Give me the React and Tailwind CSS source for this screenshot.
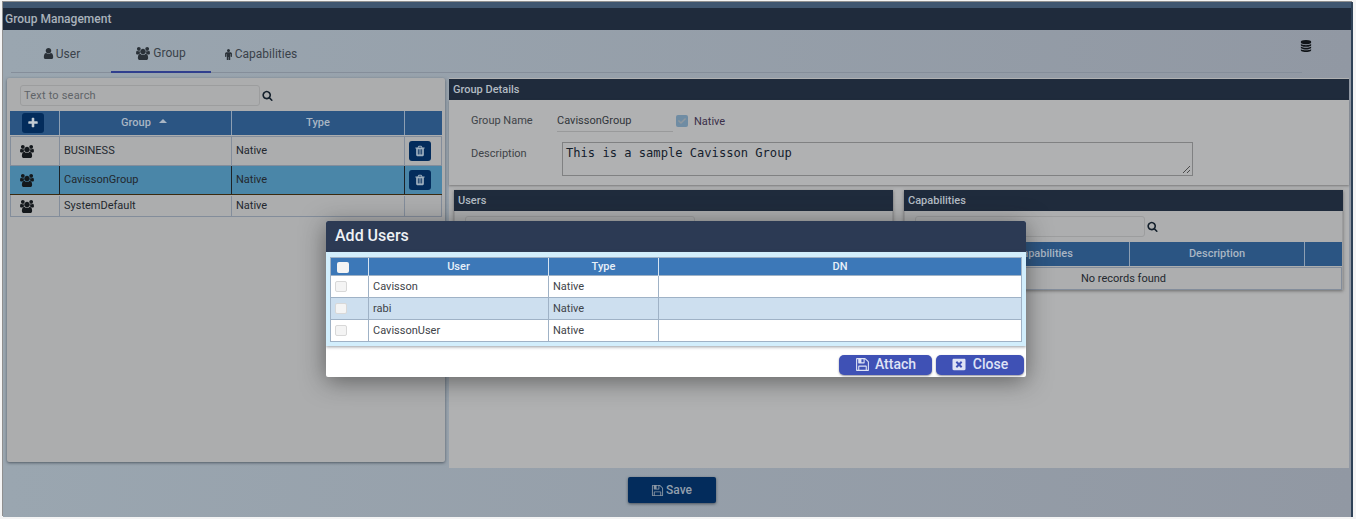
import React from 'react';
import { FaWindowClose, FaCheck } from 'react-icons/fa';

// font awesome 4 glyphs, the fa package only has the newer shapes
const glyphs = {
    user: { box: '0 0 1792 1792', d: 'M1536 1399q0 109-62.5 187t-150.5 78h-854q-88 0-150.5-78t-62.5-187q0-85 8.5-160.5t31.5-152 58.5-131 94-89 134.5-34.5q131 128 313 128t313-128q76 0 134.5 34.5t94 89 58.5 131 31.5 152 8.5 160.5zm-256-887q0 159-112.5 271.5t-271.5 112.5-271.5-112.5-112.5-271.5 112.5-271.5 271.5-112.5 271.5 112.5 112.5 271.5z' },
    users: { box: '0 0 1920 1792', d: 'M593 896q-162 5-265 128h-134q-82 0-138-40.5t-56-118.5q0-353 124-353 6 0 43.5 21t97.5 42.5 119 21.5q67 0 133-23-5 37-5 66 0 139 81 256zm1071 637q0 120-73 189.5t-194 69.5h-874q-121 0-194-69.5t-73-189.5q0-53 3.5-103.5t14-109 26.5-108.5 43-97.5 62-81 85.5-53.5 111.5-20q10 0 43 21.5t73 48 107 48 135 21.5 135-21.5 107-48 73-48 43-21.5q61 0 111.5 20t85.5 53.5 62 81 43 97.5 26.5 108.5 14 109 3.5 103.5zm-1024-1277q0 106-75 181t-181 75-181-75-75-181 75-181 181-75 181 75 75 181zm704 384q0 159-112.5 271.5t-271.5 112.5-271.5-112.5-112.5-271.5 112.5-271.5 271.5-112.5 271.5 112.5 112.5 271.5zm576 225q0 78-56 118.5t-138 40.5h-134q-103-123-265-128 81-117 81-256 0-29-5-66 66 23 133 23 59 0 119-21.5t97.5-42.5 43.5-21q124 0 124 353zm-128-609q0 106-75 181t-181 75-181-75-75-181 75-181 181-75 181 75 75 181z' },
    male: { box: '0 0 1024 1792', d: 'M1024 832v416q0 40-28 68t-68 28-68-28-28-68v-352h-64v912q0 46-33 79t-79 33-79-33-33-79v-464h-64v464q0 46-33 79t-79 33-79-33-33-79v-912h-64v352q0 40-28 68t-68 28-68-28-28-68v-416q0-80 56-136t136-56h640q80 0 136 56t56 136zm-288-448q0 93-65.5 158.5t-158.5 65.5-158.5-65.5-65.5-158.5 65.5-158.5 158.5-65.5 158.5 65.5 65.5 158.5z' },
    save: { box: '0 0 1792 1792', d: 'M512 1536h768v-384h-768v384zm896 0h128v-896q0-14-10-38.5t-20-34.5l-281-281q-10-10-34-20t-39-10v416q0 40-28 68t-68 28h-576q-40 0-68-28t-28-68v-416h-128v1280h128v-416q0-40 28-68t68-28h832q40 0 68 28t28 68v416zm-384-928v-320q0-13-9.5-22.5t-22.5-9.5h-192q-13 0-22.5 9.5t-9.5 22.5v320q0 13 9.5 22.5t22.5 9.5h192q13 0 22.5-9.5t9.5-22.5zm640 32v928q0 40-28 68t-68 28h-1344q-40 0-68-28t-28-68v-1344q0-40 28-68t68-28h928q40 0 88 20t76 48l280 280q28 28 48 76t20 88z' },
    trash: { box: '0 0 1792 1792', d: 'M704 1376v-704q0-14-9-23t-23-9h-64q-14 0-23 9t-9 23v704q0 14 9 23t23 9h64q14 0 23-9t9-23zm256 0v-704q0-14-9-23t-23-9h-64q-14 0-23 9t-9 23v704q0 14 9 23t23 9h64q14 0 23-9t9-23zm256 0v-704q0-14-9-23t-23-9h-64q-14 0-23 9t-9 23v704q0 14 9 23t23 9h64q14 0 23-9t9-23zm-544-992h448l-48-117q-7-9-17-11h-317q-10 2-17 11zm928 32v64q0 14-9 23t-23 9h-96v948q0 83-47 143.5t-113 60.5h-832q-66 0-113-58.5t-47-141.5v-952h-96q-14 0-23-9t-9-23v-64q0-14 9-23t23-9h309l70-167q15-37 54-63t79-26h320q40 0 79 26t54 63l70 167h309q14 0 23 9t9 23z' },
    search: { box: '0 0 1792 1792', d: 'M1216 832q0-185-131.5-316.5t-316.5-131.5-316.5 131.5-131.5 316.5 131.5 316.5 316.5 131.5 316.5-131.5 131.5-316.5zm512 832q0 52-38 90t-90 38q-54 0-90-38l-343-342q-179 124-399 124-143 0-273.5-55.5t-225-150-150-225-55.5-273.5 55.5-273.5 150-225 225-150 273.5-55.5 273.5 55.5 225 150 150 225 55.5 273.5q0 220-124 399l343 343q37 37 37 90z' },
    database: { box: '0 0 1792 1792', d: 'M896 768q237 0 443-43t325-127v170q0 69-103 128t-280 93.5-385 34.5-385-34.5-280-93.5-103-128v-170q119 84 325 127t443 43zm0 768q237 0 443-43t325-127v170q0 69-103 128t-280 93.5-385 34.5-385-34.5-280-93.5-103-128v-170q119 84 325 127t443 43zm0-384q237 0 443-43t325-127v170q0 69-103 128t-280 93.5-385 34.5-385-34.5-280-93.5-103-128v-170q119 84 325 127t443 43zm0-1152q208 0 385 34.5t280 93.5 103 128v128q0 69-103 128t-280 93.5-385 34.5-385-34.5-280-93.5-103-128v-128q0-69 103-128t280-93.5 385-34.5z' },
    plus: { box: '0 0 1792 1792', d: 'M1600 736v192q0 40-28 68t-68 28h-416v416q0 40-28 68t-68 28h-192q-40 0-68-28t-28-68v-416h-416q-40 0-68-28t-28-68v-192q0-40 28-68t68-28h416v-416q0-40 28-68t68-28h192q40 0 68 28t28 68v416h416q40 0 68 28t28 68z' },
};

function Glyph({ name, className }) {
    const g = glyphs[name];
    return (
        <svg viewBox={g.box} className={`shrink-0 ${className}`} fill="currentColor">
            <path d={g.d} />
        </svg>
    );
}

const groupCols = 'grid grid-cols-[50px_172px_173px_37px]';
const capCols = 'grid grid-cols-[54px_171px_175px_37px]';
const userCols = 'grid grid-cols-[38px_180px_110px_1fr]';

const groups = [
    { name: 'BUSINESS', rowClass: 'h-[29px] border-b border-[#838d9b]', trash: true },
    { name: 'CavissonGroup', rowClass: 'h-[29px] bg-[#4a86a8] border-b border-[#3a2a10]', trash: true, selected: true },
    { name: 'SystemDefault', rowClass: 'h-[22px] pt-[1px] border-b border-[#838d9b]', trash: false },
];

const users = ['Cavisson', 'rabi', 'CavissonUser'];

function SearchBox({ width, placeholder }) {
    return (
        <div className="flex items-center gap-[2px]">
            <div className={`${width} h-[21px] border border-[#9c9d9e] rounded-[3px] pl-[3px] text-[11px] leading-[20px] tracking-[0.2px] text-[#5f6468]`}>
                {placeholder}
            </div>
            <Glyph name="search" className="w-[11px] h-[11px] text-[#14202c]" />
        </div>
    );
}

function PanelTitle({ children }) {
    return <div className="h-[21px] bg-[#1f2b3c] text-[#b3bbc3] text-[11px] font-medium leading-[21px] pl-1">{children}</div>;
}

function SubPanel({ title, heads, empty }) {
    return (
        <div className="w-[439px] h-[100px] shadow-[0_1px_3px_rgba(60,60,60,0.6)]">
            <PanelTitle>{title}</PanelTitle>
            <div className="bg-[#adaeaf] border-x border-[#9c9d9e] h-[79px]">
                <div className="pl-[10px] h-[31px] pt-[5px]">
                    <SearchBox width="w-[230px]" />
                </div>
                <div className={`${capCols} h-[24px] bg-[#2b5583] text-[#a9b6c4] text-[11px] font-medium leading-[24px] text-center`}>
                    {heads.map((h, i) => (
                        <div key={i} className="border-r border-[#8d9fb3] last:border-r-0">{h}</div>
                    ))}
                </div>
                <div className="h-[23px] mt-[1px] border border-[#838d9b] text-center text-[11px] leading-[21px] text-[#23282e]">{empty}</div>
            </div>
        </div>
    );
}

export default function App() {
    return (
        <div className="w-[1356px] h-[519px] overflow-hidden relative bg-[#f4f4f4] font-['Roboto',sans-serif] pl-[3px] pr-[3px] pt-[2px] pb-[2px]">
            <div className="h-[515px] border-r-[2px] border-[#2f4257] bg-gradient-to-r from-[#9aa6b0] to-[#9198a3] flex flex-col relative shadow-[-1px_-1px_0_#8f8f8f]">
                <div className="h-[6px] bg-[#3f5670]"></div>
                <div className="h-[22px] bg-[#1f2b3c] text-[#a9b2bb] text-[12px] font-medium leading-[22px] pl-[2px]">Group Management</div>

                {/* tabs */}
                <div className="h-[43px] ml-[8px] mr-[49px] border-b border-[#858e9a] flex relative text-[12px] text-[#3a424a]">
                    <div className="w-[100px] flex items-center justify-center gap-[1px] pt-[5px]">
                        <Glyph name="user" className="w-[13px] h-[13px] text-[#2a3138]" />User
                    </div>
                    <div className="w-[100px] flex items-center justify-center gap-[3px] pt-[5px] border-b-2 border-[#303f8e] -mb-px">
                        <Glyph name="users" className="w-[14px] h-[13px] text-[#2a3138]" />Group
                    </div>
                    <div className="w-[100px] flex items-center justify-center gap-[3px] pt-[5px]">
                        <Glyph name="male" className="w-[7px] h-[12px] text-[#2a3138]" />Capabilities
                    </div>
                    <Glyph name="database" className="absolute right-[-10px] top-[10px] w-[12px] h-[12px] text-[#101418]" />
                </div>

                <div className="flex pl-[4px] pr-[1px] pt-[5px] gap-[4px]">
                    {/* left panel */}
                    <div className="w-[438px] h-[384px] bg-[#acadae] rounded-[2px] shadow-[0_1px_3px_rgba(50,60,70,0.7)] px-[3px] pt-[2px]">
                        <div className="h-[30px] pl-[10px] pt-[5px]">
                            <SearchBox width="w-[240px]" placeholder="Text to search" />
                        </div>
                        <div className={`${groupCols} h-[24px] mt-[1px] bg-[#2b5583] text-[#a9b6c4] text-[11px] font-medium leading-[24px] text-center`}>
                            <div className="border-r border-[#8d9fb3] flex items-center pl-[12px]">
                                <div className="w-[22px] h-[20px] rounded-[3px] bg-[#032c5c] flex items-center justify-center">
                                    <Glyph name="plus" className="w-[12px] h-[12px] text-[#c3ccd4]" />
                                </div>
                            </div>
                            <div className="border-r border-[#8d9fb3] flex items-center justify-center gap-[8px] pr-[3px]">
                                Group
                                <span className="w-0 h-0 border-x-[4px] border-x-transparent border-b-[4px] border-b-[#a9b6c4] -mt-[4px]"></span>
                            </div>
                            <div className="border-r border-[#8d9fb3]">Type</div>
                            <div></div>
                        </div>
                        <div className="border-x border-t border-[#838d9b] mt-[1px] text-[11px] text-[#23282e]">
                            {groups.map((g) => (
                                <div key={g.name} className={`${groupCols} ${g.rowClass} -mx-px`}>
                                    <div className={`flex items-center pl-[10px] border-r ${g.selected ? 'border-[#1c2328]' : 'border-[#838d9b]'}`}>
                                        <Glyph name="users" className="w-[14px] h-[13px] text-[#14181c]" />
                                    </div>
                                    <div className={`flex items-center pl-[4px] border-r ${g.selected ? 'border-[#1c2328]' : 'border-[#838d9b]'}`}>{g.name}</div>
                                    <div className={`flex items-center pl-[4px] border-r ${g.selected ? 'border-[#1c2328]' : 'border-[#838d9b]'}`}>Native</div>
                                    <div className="flex items-center pl-[4px]">
                                        {g.trash && (
                                            <div className="w-[22px] h-[20px] rounded-[3px] bg-[#032c5c] flex items-center justify-center">
                                                <Glyph name="trash" className="w-[12px] h-[12px] text-[#9fb0bf]" />
                                            </div>
                                        )}
                                    </div>
                                </div>
                            ))}
                        </div>
                    </div>

                    {/* right panel */}
                    <div className="w-[900px] h-[390px] bg-[#b0b1b2]">
                        <div className="h-[1px]"></div>
                        <PanelTitle>Group Details</PanelTitle>
                        <div className="h-[85px] pt-[9px] shadow-[0_1px_2px_rgba(70,70,70,0.5)] text-[11px] text-[#3e4348]">
                            <div className="flex items-center h-[23px]">
                                <div className="w-[108px] pl-[22px] pt-[2px]">Group Name</div>
                                <div className="w-[116px] h-[22px] border-b border-[#999a9b] leading-[22px] text-[#30353a]">CavissonGroup</div>
                                <div className="w-[12px] h-[12px] rounded-[2px] bg-[#6f8ca3] ml-[3px] flex items-center justify-center">
                                    <FaCheck className="w-[8px] h-[8px] text-[#8f989f]" />
                                </div>
                                <div className="ml-[6px] pt-[3px] text-[#3a2f48]">Native</div>
                            </div>
                            <div className="flex mt-[2px] pt-[8px]">
                                <div className="w-[113px] pl-[22px] pt-[4px]">Description</div>
                                <div className="relative w-[631px] h-[34px] border border-[#808182] pl-[3px] pt-[3px] font-['DejaVu_Sans_Mono',monospace] text-[12.1px] leading-[15px] text-[#14202c]">
                                    This is a sample Cavisson Group
                                    <svg className="absolute right-[1px] bottom-[1px] w-[9px] h-[9px]" viewBox="0 0 9 9">
                                        <path d="M1 8 L8 1 M5 8 L8 5" stroke="#4a4a4a" strokeWidth="1" />
                                    </svg>
                                </div>
                            </div>
                        </div>
                        <div className="flex pl-[5px] gap-[11px] pt-[5px]">
                            <SubPanel title="Users" heads={['', '', '', '']} />
                            <SubPanel title="Capabilities" heads={['', 'Capabilities', 'Description', '']} empty="No records found" />
                        </div>
                    </div>
                </div>

                <div className="flex justify-center pt-[9px] pr-[11px]">
                    <div className="w-[88px] h-[26px] rounded-[2px] bg-[#032c5c] shadow-[0_1px_3px_rgba(40,50,60,0.7)] flex items-center justify-center gap-[2px] text-[12px] font-medium text-[#929fad]">
                        <Glyph name="save" className="w-[13px] h-[13px] text-[#8b97a4]" />Save
                    </div>
                </div>
            </div>

            {/* Add Users dialog */}
            <div className="absolute left-[326px] top-[221px] w-[700px] h-[156px] rounded-[2px] bg-white shadow-[0_4px_24px_rgba(30,30,30,0.55)] overflow-hidden flex flex-col">
                <div className="h-[31px] bg-[#2c3a54] text-[#eef1f5] text-[16px] font-medium leading-[29px] pl-[9px]">Add Users</div>
                <div className="h-[94px] bg-[#d2eefc] pl-[4px] pr-[4px] pt-[5px] shadow-[0_1px_3px_rgba(80,90,100,0.6)]">
                    <div className="border border-[#9fb2c6]">
                        <div className={`${userCols} h-[17px] bg-[#3c78b8] text-[#e8f0f8] text-[11px] font-medium leading-[18px] text-center`}>
                            <div className="border-r border-[#d6e4f2] flex items-center pl-[6px]">
                                <div className="w-[12px] h-[11px] rounded-[2px] bg-[#f4f4f4]"></div>
                            </div>
                            <div className="border-r border-[#d6e4f2]">User</div>
                            <div className="border-r border-[#d6e4f2]">Type</div>
                            <div>DN</div>
                        </div>
                        {users.map((u, i) => (
                            <div key={u} className={`${userCols} h-[22px] text-[11px] text-[#3e4348] border-t border-[#9fb2c6] ${i === 1 ? 'bg-[#cddfef]' : 'bg-white'}`}>
                                <div className="border-r border-[#9fb2c6] flex items-center pl-[4px]">
                                    <div className="w-[12px] h-[11px] rounded-[2px] border border-[#d8d8d8] bg-[#f4f4f4]"></div>
                                </div>
                                <div className="border-r border-[#9fb2c6] flex items-center pl-[4px] pt-[2px]">{u}</div>
                                <div className="border-r border-[#9fb2c6] flex items-center pl-[4px] pt-[2px]">Native</div>
                                <div></div>
                            </div>
                        ))}
                    </div>
                </div>
                <div className="flex-1 flex justify-end items-start gap-[4px] pt-[9px] pr-[2px]">
                    <div className="w-[93px] h-[20px] pb-[2px] rounded-[5px] bg-[#3f51b5] shadow-[0_1px_2px_rgba(40,40,60,0.5)] flex items-center justify-center gap-[5px] text-[#dfe3f5] text-[14px] font-medium">
                        <Glyph name="save" className="w-[15px] h-[15px]" />Attach
                    </div>
                    <div className="w-[88px] h-[20px] pb-[2px] rounded-[5px] bg-[#3f51b5] shadow-[0_1px_2px_rgba(40,40,60,0.5)] flex items-center justify-center gap-[7px] text-[#dfe3f5] text-[14px] font-medium">
                        <FaWindowClose className="w-[14px] h-[13px]" />Close
                    </div>
                </div>
            </div>
        </div>
    );
}
